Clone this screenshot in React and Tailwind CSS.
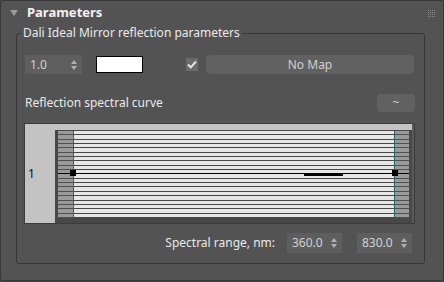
import React from 'react'

const font = { fontFamily: '"Noto Sans", "Liberation Sans", sans-serif' }

function Arrows() {
  return (
    <svg width="6" height="12" viewBox="0 0 6 12" className="shrink-0">
      <path d="M3 1 L6 5 L0 5 Z" fill="#b0b0b0" />
      <path d="M0 7 L6 7 L3 11 Z" fill="#b0b0b0" />
    </svg>
  )
}

function Spinner({ value, className }) {
  return (
    <div className={`flex items-center justify-between bg-[#5e5e5e] pl-[5px] pr-[5px] text-[#d2d2d2] ${className}`}>
      <span className="leading-none">{value}</span>
      <Arrows />
    </div>
  )
}

const rows = Array.from({ length: 20 })

export default function App() {
  return (
    <div className="w-[444px] h-[282px] bg-[#454545] text-[12px]" style={font}>
      <div className="h-[281px] rounded-[3px] border border-[#383838] bg-[#535353]">
        {/* Rollout header */}
        <div className="flex h-[24px] items-center pl-[9px] pr-[8px]">
          <div className="h-0 w-0 border-l-[4px] border-r-[4px] border-t-[6px] border-l-transparent border-r-transparent border-t-[#9c9c9c]" />
          <span className="ml-[9px] text-[13px] font-bold text-[#f2f2f2]">Parameters</span>
          <div className="ml-auto grid grid-cols-4 gap-[1px]">
            {Array.from({ length: 16 }).map((_, i) => (
              <div key={i} className="h-[1px] w-[1px] bg-[#8c8c8c]" />
            ))}
          </div>
        </div>

        {/* Group box */}
        <div className="relative ml-[15px] mt-[8px] h-[231px] w-[409px] rounded-[3px] border border-[#363636] pl-[8px] pt-[21px]">
          <span className="absolute -top-[10px] left-[4px] bg-[#535353] px-[2px] text-[#eaeaea]">
            Dali Ideal Mirror reflection parameters
          </span>

          <div className="flex items-center">
            <Spinner value="1.0" className="h-[19px] w-[57px]" />
            <div className="ml-[14px] h-[17px] w-[47px] border border-black bg-white" />
            <div className="ml-[43px] flex h-[13px] w-[12px] items-center justify-center bg-[#6a6a6a]">
              <svg width="10" height="9" viewBox="0 0 10 9">
                <path d="M1 4.5 L3.8 7.3 L9 1.5" stroke="#e6e6e6" strokeWidth="2" fill="none" />
              </svg>
            </div>
            <div className="ml-[8px] flex h-[19px] w-[208px] items-center justify-center rounded-[4px] bg-[#616161] text-[#cfcfcf]">
              No Map
            </div>
          </div>

          <div className="mt-[20px] flex items-center">
            <span className="text-[#eaeaea]">Reflection spectral curve</span>
            <div className="ml-auto mr-[9px] flex h-[18px] w-[38px] items-center justify-center rounded-[4px] bg-[#616161] text-[#cfcfcf]">
              ~
            </div>
          </div>

          {/* Curve widget */}
          <div className="mt-[11px] flex h-[101px] w-[391px] border border-[#3b3b3b] bg-[#5a5a5a]" style={{ marginLeft: -1 }}>
            <div className="flex w-[30px] items-center bg-[#c3c3c3] pl-[3px] text-[#111]">1</div>
            <div className="flex w-[357px] flex-col">
              <div className="h-[6px] bg-[#c3c3c3]" />
              <div className="flex-1 bg-[#484848] pb-[5px] pl-[3px] pr-[3px] pt-[1px]">
                <div className="relative flex h-full">
                  <div className="flex w-[15px] flex-col bg-[#9a9a9a]">
                    {rows.map((_, i) => (
                      <div key={i} className="flex-1 border-b border-[#505050]" />
                    ))}
                  </div>
                  <div className="w-[1px] bg-[#2a6464]" />
                  <div className="flex flex-1 flex-col bg-[#e6e6e6]">
                    {rows.map((_, i) => (
                      <div key={i} className="flex-1 border-b border-[#474747]" />
                    ))}
                  </div>
                  <div className="w-[1px] bg-[#2a6464]" />
                  <div className="flex w-[14px] flex-col bg-[#9a9a9a]">
                    {rows.map((_, i) => (
                      <div key={i} className="flex-1 border-b border-[#505050]" />
                    ))}
                  </div>
                  <svg className="absolute inset-0" width="351" height="87" viewBox="0 0 351 87">
                    <line x1="0" y1="42.5" x2="351" y2="42.5" stroke="#000" strokeWidth="1" />
                    <rect x="12" y="39" width="6" height="6" fill="#000" />
                    <rect x="334" y="39" width="6" height="6" fill="#000" />
                    <rect x="246" y="43" width="39" height="2" fill="#000" />
                  </svg>
                </div>
              </div>
            </div>
          </div>

          <div className="mt-[9px] flex items-center justify-end pr-[12px]">
            <span className="text-[#eaeaea]">Spectral range, nm:</span>
            <Spinner value="360.0" className="ml-[12px] h-[20px] w-[55px]" />
            <Spinner value="830.0" className="ml-[15px] h-[20px] w-[55px]" />
          </div>
        </div>
      </div>
    </div>
  )
}
